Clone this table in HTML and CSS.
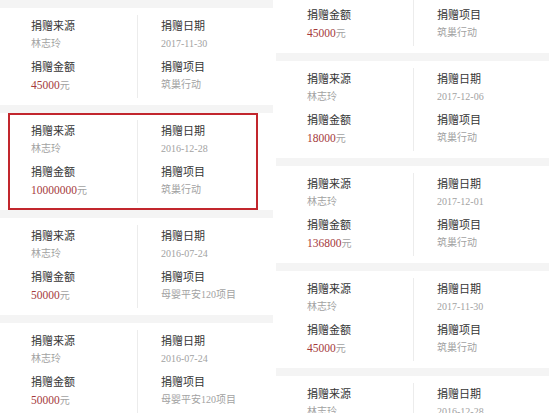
FILE: index.html
```html
<!DOCTYPE html>
<html lang="zh-CN">
<head>
<meta charset="utf-8">
<title>捐赠记录</title>
<link rel="stylesheet" href="styles.css">
</head>
<body>
<div class="page">
  <div class="column column-left">
    <div class="card">
      <div class="cell">
        <div class="label">捐赠来源</div><div class="value">林志玲</div>
        <div class="label label-2">捐赠金额</div><div class="amount">45000<span class="unit">元</span></div>
      </div>
      <div class="cell cell-right">
        <div class="label">捐赠日期</div><div class="value">2017-11-30</div>
        <div class="label label-2">捐赠项目</div><div class="value">筑巢行动</div>
      </div>
    </div>
    <div class="card card-marked">
      <div class="cell">
        <div class="label">捐赠来源</div><div class="value">林志玲</div>
        <div class="label label-2">捐赠金额</div><div class="amount">10000000<span class="unit">元</span></div>
      </div>
      <div class="cell cell-right">
        <div class="label">捐赠日期</div><div class="value">2016-12-28</div>
        <div class="label label-2">捐赠项目</div><div class="value">筑巢行动</div>
      </div>
    </div>
    <div class="card">
      <div class="cell">
        <div class="label">捐赠来源</div><div class="value">林志玲</div>
        <div class="label label-2">捐赠金额</div><div class="amount">50000<span class="unit">元</span></div>
      </div>
      <div class="cell cell-right">
        <div class="label">捐赠日期</div><div class="value">2016-07-24</div>
        <div class="label label-2">捐赠项目</div><div class="value">母婴平安120项目</div>
      </div>
    </div>
    <div class="card">
      <div class="cell">
        <div class="label">捐赠来源</div><div class="value">林志玲</div>
        <div class="label label-2">捐赠金额</div><div class="amount">50000<span class="unit">元</span></div>
      </div>
      <div class="cell cell-right">
        <div class="label">捐赠日期</div><div class="value">2016-07-24</div>
        <div class="label label-2">捐赠项目</div><div class="value">母婴平安120项目</div>
      </div>
    </div>
  </div>

  <div class="column column-right">
    <div class="card">
      <div class="cell">
        <div class="label">捐赠来源</div><div class="value">林志玲</div>
        <div class="label label-2">捐赠金额</div><div class="amount">45000<span class="unit">元</span></div>
      </div>
      <div class="cell cell-right">
        <div class="label">捐赠日期</div><div class="value">2017-12-12</div>
        <div class="label label-2">捐赠项目</div><div class="value">筑巢行动</div>
      </div>
    </div>
    <div class="card">
      <div class="cell">
        <div class="label">捐赠来源</div><div class="value">林志玲</div>
        <div class="label label-2">捐赠金额</div><div class="amount">18000<span class="unit">元</span></div>
      </div>
      <div class="cell cell-right">
        <div class="label">捐赠日期</div><div class="value">2017-12-06</div>
        <div class="label label-2">捐赠项目</div><div class="value">筑巢行动</div>
      </div>
    </div>
    <div class="card">
      <div class="cell">
        <div class="label">捐赠来源</div><div class="value">林志玲</div>
        <div class="label label-2">捐赠金额</div><div class="amount">136800<span class="unit">元</span></div>
      </div>
      <div class="cell cell-right">
        <div class="label">捐赠日期</div><div class="value">2017-12-01</div>
        <div class="label label-2">捐赠项目</div><div class="value">筑巢行动</div>
      </div>
    </div>
    <div class="card">
      <div class="cell">
        <div class="label">捐赠来源</div><div class="value">林志玲</div>
        <div class="label label-2">捐赠金额</div><div class="amount">45000<span class="unit">元</span></div>
      </div>
      <div class="cell cell-right">
        <div class="label">捐赠日期</div><div class="value">2017-11-30</div>
        <div class="label label-2">捐赠项目</div><div class="value">筑巢行动</div>
      </div>
    </div>
    <div class="card">
      <div class="cell">
        <div class="label">捐赠来源</div><div class="value">林志玲</div>
        <div class="label label-2">捐赠金额</div><div class="amount">10000000<span class="unit">元</span></div>
      </div>
      <div class="cell cell-right">
        <div class="label">捐赠日期</div><div class="value">2016-12-28</div>
        <div class="label label-2">捐赠项目</div><div class="value">筑巢行动</div>
      </div>
    </div>
  </div>
</div>
</body>
</html>
```

FILE: styles.css
```css
html, body {
  margin: 0;
  padding: 0;
  background: #ffffff;
}

body {
  width: 550px;
  height: 413px;
  overflow: hidden;
}

.page {
  display: flex;
  gap: 3px;
  height: 413px;
  overflow: hidden;
  align-items: flex-start;
}

.column {
  display: flex;
  flex-direction: column;
  gap: 8px;
  background: #f4f4f4;
  flex: none;
}

.column-left {
  width: 273px;
  padding-top: 8px;
}

.column-right {
  width: 273px;
  margin-top: -44px;
}

.card {
  position: relative;
  display: grid;
  grid-template-columns: 137px 1fr;
  height: 97px;
  box-sizing: border-box;
  padding: 7px 0 8px;
  background: #ffffff;
}

.card-marked::after {
  content: "";
  position: absolute;
  left: 8px;
  right: 15px;
  top: 0;
  bottom: 0;
  border: 2px solid #c2262d;
}

.cell {
  padding: 1px 0 3px 31px;
}

.cell-right {
  border-left: 1px solid #ececec;
  padding-left: 23px;
}

.label {
  font-family: "Noto Sans CJK SC", sans-serif;
  font-size: 11px;
  line-height: 18px;
  color: #353535;
  white-space: nowrap;
}

.label-2 {
  margin-top: 4px;
}

.value {
  font-family: "Liberation Serif", "Noto Sans CJK SC", serif;
  font-size: 10px;
  line-height: 19px;
  color: #a2a2a2;
  white-space: nowrap;
}

.amount {
  font-family: "Liberation Serif", serif;
  font-size: 11.5px;
  line-height: 19px;
  color: #a53a3c;
  white-space: nowrap;
}

.unit {
  font-family: "Noto Sans CJK SC", sans-serif;
  font-size: 10px;
  color: #a2a2a2;
}
```
